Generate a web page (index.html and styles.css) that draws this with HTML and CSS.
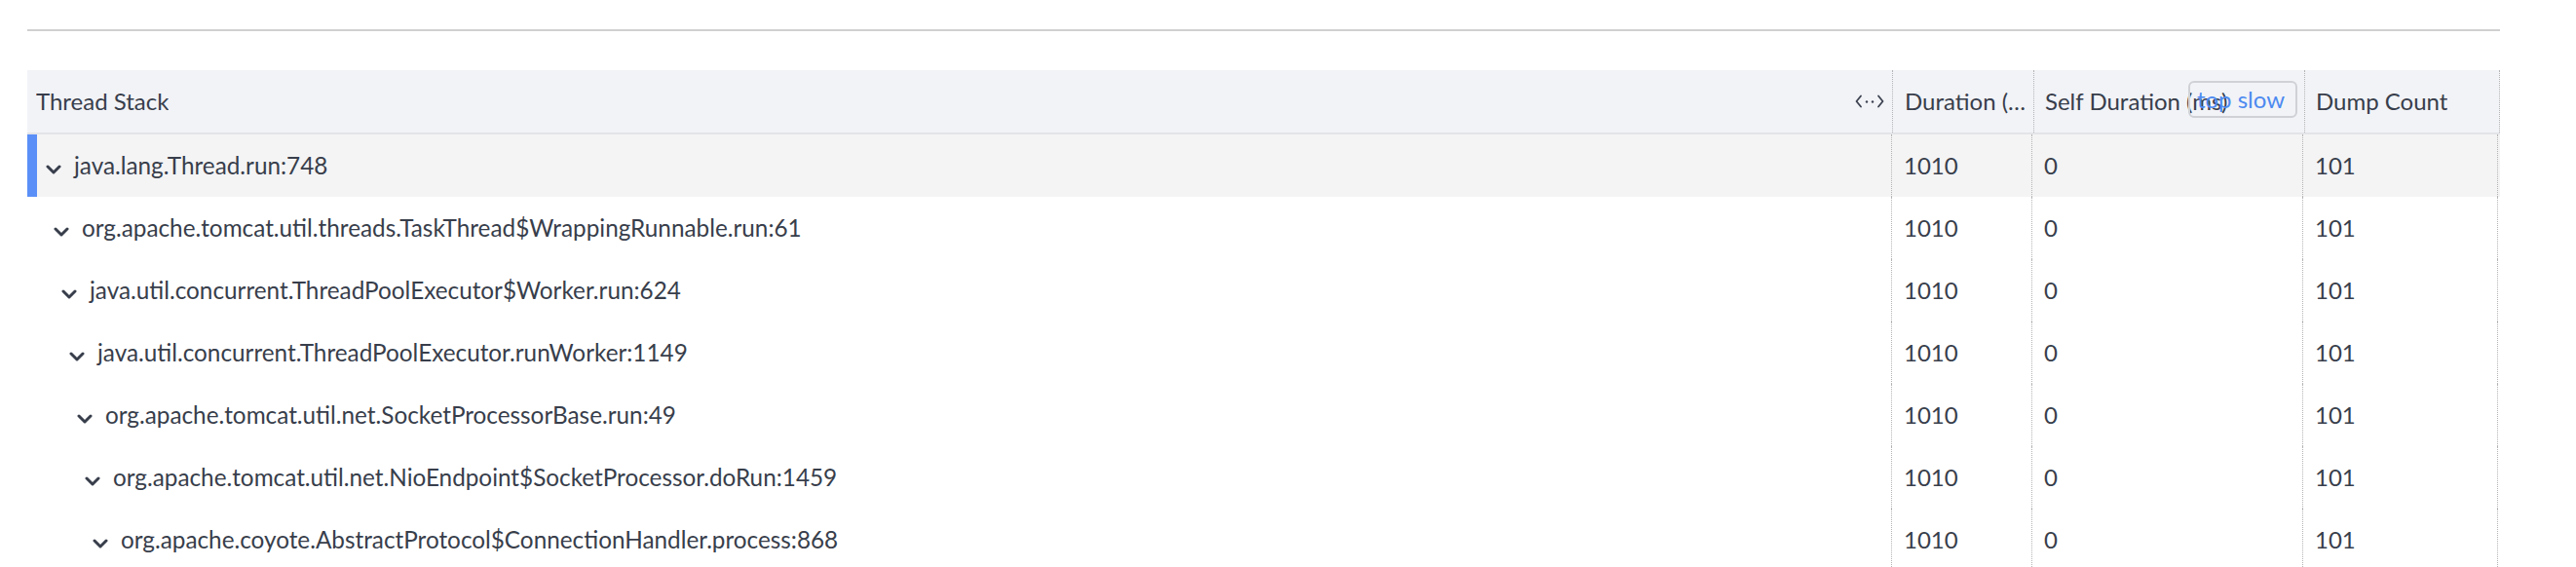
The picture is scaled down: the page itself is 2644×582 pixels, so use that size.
FILE: index.html
```html
<!DOCTYPE html>
<html lang="en">
<head>
<meta charset="utf-8">
<title>Thread Stack</title>
<link rel="stylesheet" href="styles.css">
</head>
<body>
<div class="page">
  <div class="divider"></div>
  <div class="table">
    <div class="thead">
      <div class="th th-stack">
        <span class="th-label">Thread Stack</span>
        <svg class="resize-icon" width="30" height="14" viewBox="0 0 30 14" aria-hidden="true">
          <path d="M6 1.5 L1.5 7 L6 12.5" fill="none" stroke="#3c4250" stroke-width="1.8" stroke-linecap="round" stroke-linejoin="round"/>
          <path d="M24 1.5 L28.5 7 L24 12.5" fill="none" stroke="#3c4250" stroke-width="1.8" stroke-linecap="round" stroke-linejoin="round"/>
          <circle cx="12" cy="7.5" r="1.2" fill="#3c4250"/>
          <circle cx="18" cy="7.5" r="1.2" fill="#3c4250"/>
        </svg>
      </div>
      <div class="th th-num th-duration"><span class="th-label">Duration (ms)</span></div>
      <div class="th th-num th-self">
        <span class="th-label">Self Duration (ms)</span>
        <button class="top-slow" type="button">top slow</button>
      </div>
      <div class="th th-num"><span class="th-label">Dump Count</span></div>
    </div>

    <div class="tr selected">
      <div class="td td-stack lv0"><svg class="chev" width="16" height="10" viewBox="0 0 16 10"><path d="M2 2 L8 8 L14 2"/></svg><span class="frame">java.lang.Thread.run:748</span></div>
      <div class="td">1010</div><div class="td">0</div><div class="td">101</div>
    </div>
    <div class="tr">
      <div class="td td-stack lv1"><svg class="chev" width="16" height="10" viewBox="0 0 16 10"><path d="M2 2 L8 8 L14 2"/></svg><span class="frame">org.apache.tomcat.util.threads.TaskThread$WrappingRunnable.run:61</span></div>
      <div class="td">1010</div><div class="td">0</div><div class="td">101</div>
    </div>
    <div class="tr">
      <div class="td td-stack lv2"><svg class="chev" width="16" height="10" viewBox="0 0 16 10"><path d="M2 2 L8 8 L14 2"/></svg><span class="frame">java.util.concurrent.ThreadPoolExecutor$Worker.run:624</span></div>
      <div class="td">1010</div><div class="td">0</div><div class="td">101</div>
    </div>
    <div class="tr">
      <div class="td td-stack lv3"><svg class="chev" width="16" height="10" viewBox="0 0 16 10"><path d="M2 2 L8 8 L14 2"/></svg><span class="frame">java.util.concurrent.ThreadPoolExecutor.runWorker:1149</span></div>
      <div class="td">1010</div><div class="td">0</div><div class="td">101</div>
    </div>
    <div class="tr">
      <div class="td td-stack lv4"><svg class="chev" width="16" height="10" viewBox="0 0 16 10"><path d="M2 2 L8 8 L14 2"/></svg><span class="frame">org.apache.tomcat.util.net.SocketProcessorBase.run:49</span></div>
      <div class="td">1010</div><div class="td">0</div><div class="td">101</div>
    </div>
    <div class="tr">
      <div class="td td-stack lv5"><svg class="chev" width="16" height="10" viewBox="0 0 16 10"><path d="M2 2 L8 8 L14 2"/></svg><span class="frame">org.apache.tomcat.util.net.NioEndpoint$SocketProcessor.doRun:1459</span></div>
      <div class="td">1010</div><div class="td">0</div><div class="td">101</div>
    </div>
    <div class="tr">
      <div class="td td-stack lv6"><svg class="chev" width="16" height="10" viewBox="0 0 16 10"><path d="M2 2 L8 8 L14 2"/></svg><span class="frame">org.apache.coyote.AbstractProtocol$ConnectionHandler.process:868</span></div>
      <div class="td">1010</div><div class="td">0</div><div class="td">101</div>
    </div>
  </div>
</div>
</body>
</html>
```

FILE: styles.css
```css
* { box-sizing: border-box; }

html, body {
  margin: 0;
  padding: 0;
  background: #ffffff;
}

body {
  font-family: Lato, "Noto Sans", sans-serif;
  font-size: 24px;
  color: #383e4b;
}

.page {
  padding: 30px 0 0 28px;
  width: 2566px;
}

.divider {
  height: 2px;
  background: #d0d0d0;
}

.table {
  margin-top: 40px;
  width: 2538px;
}

.thead {
  display: grid;
  grid-template-columns: 1915px 145px 278px 200px;
  height: 66px;
  background: #f2f3f7;
  border-bottom: 2px solid #e3e4e8;
}

.th {
  position: relative;
  display: flex;
  align-items: center;
  min-width: 0;
  padding: 0 10px 2px 11px;
  border-right: 1px dotted #b4b4b4;
  white-space: nowrap;
}

.th-label {
  overflow: hidden;
  text-overflow: ellipsis;
  white-space: nowrap;
  min-width: 0;
}

.th-stack {
  padding-left: 9px;
  justify-content: space-between;
  padding-right: 8px;
}

.th-duration {
  padding-left: 12px;
  padding-right: 3px;
}

.resize-icon {
  flex: none;
  margin-top: 2px;
}

.top-slow {
  position: absolute;
  top: 11px;
  right: 7px;
  width: 112px;
  height: 38px;
  padding: 0 11px 0 0;
  border: 2px solid #cfd1d6;
  border-radius: 6px;
  background: transparent;
  color: #4d8af0;
  font-family: Lato, "Noto Sans", sans-serif;
  font-size: 24px;
  line-height: 1;
  text-align: right;
}

.tr {
  display: grid;
  grid-template-columns: 1914px 144px 278px 200px;
  height: 64px;
}

.tr.selected {
  background: #f4f4f5;
  box-shadow: inset 10px 0 0 #5a8ff7;
}

.td {
  display: flex;
  align-items: center;
  padding-left: 12px;
  padding-bottom: 1px;
  border-right: 1px dotted #b4b4b4;
  white-space: nowrap;
  min-width: 0;
}

.td-stack {
  gap: 13px;
}

.frame {
  font-size: 24.3px;
}

.chev {
  flex: none;
  margin-top: 8px;
}

.chev path {
  fill: none;
  stroke: #383e4b;
  stroke-width: 3;
  stroke-linecap: round;
  stroke-linejoin: round;
}

.lv0 { padding-left: 19px; }
.lv1 { padding-left: 27px; }
.lv2 { padding-left: 35px; }
.lv3 { padding-left: 43px; }
.lv4 { padding-left: 51px; }
.lv5 { padding-left: 59px; }
.lv6 { padding-left: 67px; }
```
